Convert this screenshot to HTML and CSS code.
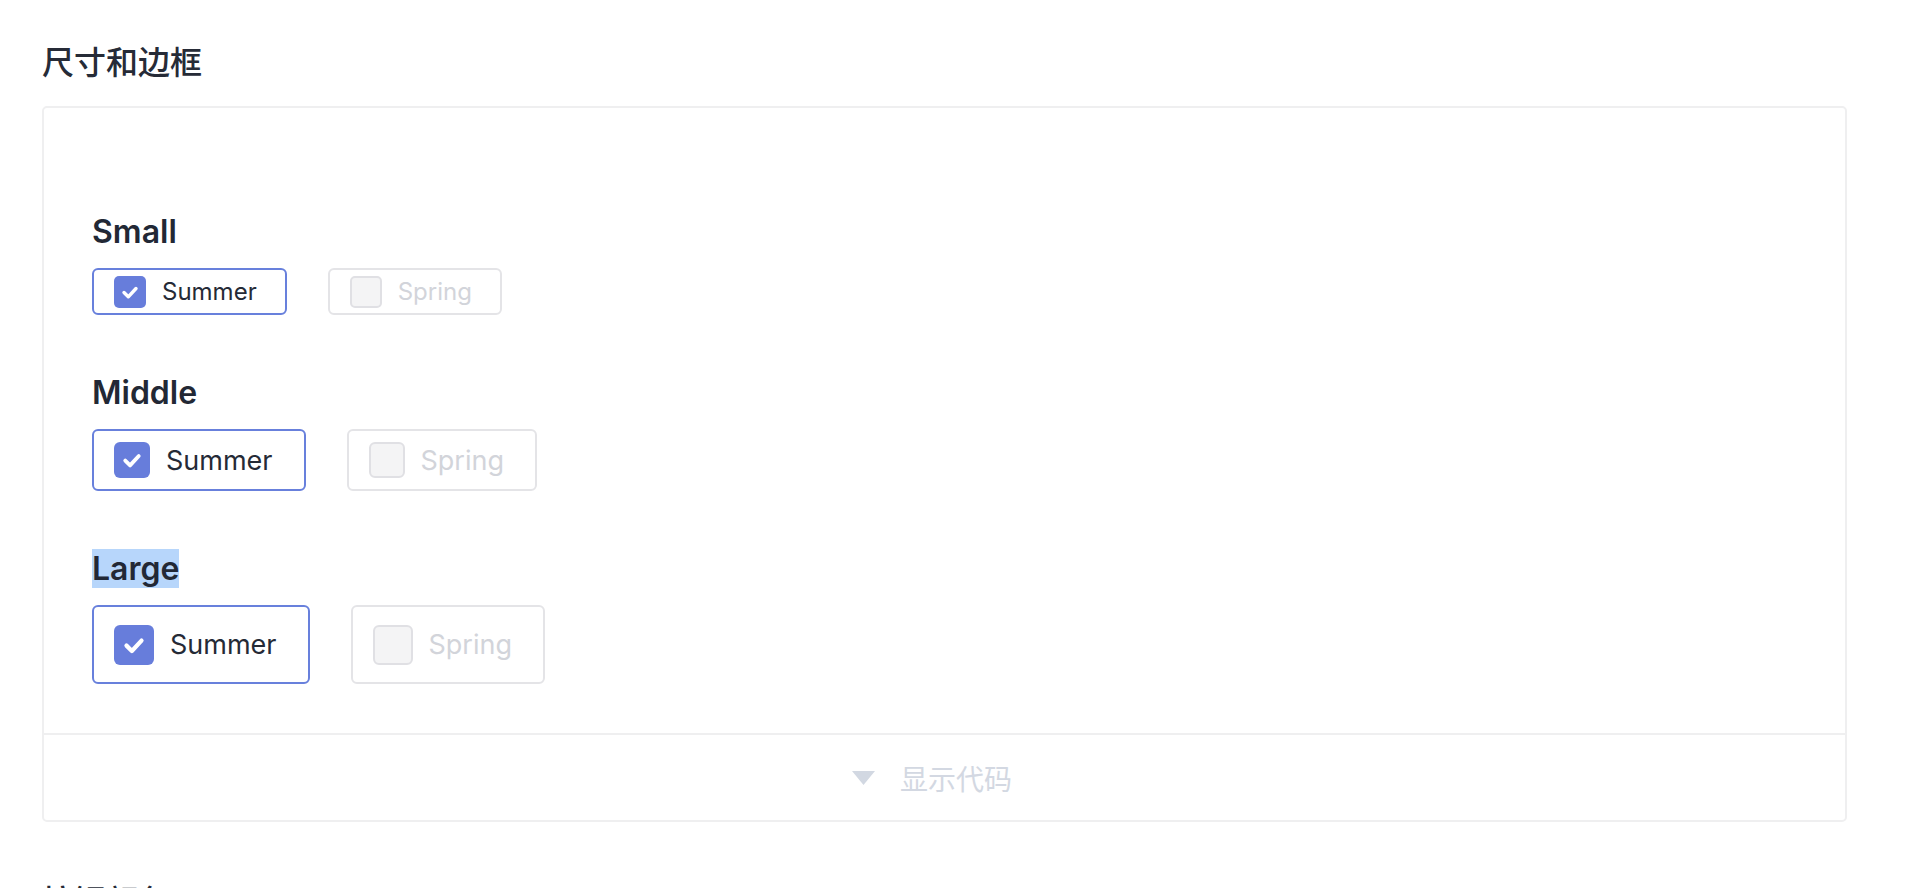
FILE: index.html
```html
<!DOCTYPE html>
<html lang="zh-CN">
<head>
    <meta charset="UTF-8">
    <meta name="viewport" content="width=device-width, initial-scale=1.0">
    <title>Checkbox 尺寸和边框</title>
    <link rel="stylesheet" href="styles.css">
</head>
<body>

<div class="page">
    <h2 class="section-title">尺寸和边框</h2>

    <div class="demo-block">
        <div class="demo-body">

            <div class="size-group">
                <h4 class="size-label">Small</h4>
                <div class="check-row">
                    <label class="check-item small checked">
                        <span class="check-box">
                            <svg viewBox="0 0 32 32"><polyline points="10,16.5 14.3,20.8 22,12.5"/></svg>
                        </span>
                        <span class="check-text">Summer</span>
                    </label>
                    <label class="check-item small disabled">
                        <span class="check-box"></span>
                        <span class="check-text">Spring</span>
                    </label>
                </div>
            </div>

            <div class="size-group">
                <h4 class="size-label">Middle</h4>
                <div class="check-row">
                    <label class="check-item middle checked">
                        <span class="check-box">
                            <svg viewBox="0 0 32 32"><polyline points="10,16.5 14.3,20.8 22,12.5"/></svg>
                        </span>
                        <span class="check-text">Summer</span>
                    </label>
                    <label class="check-item middle disabled">
                        <span class="check-box"></span>
                        <span class="check-text">Spring</span>
                    </label>
                </div>
            </div>

            <div class="size-group">
                <h4 class="size-label"><span class="selected">Large</span></h4>
                <div class="check-row">
                    <label class="check-item large checked">
                        <span class="check-box">
                            <svg viewBox="0 0 32 32"><polyline points="10,16.5 14.3,20.8 22,12.5"/></svg>
                        </span>
                        <span class="check-text">Summer</span>
                    </label>
                    <label class="check-item large disabled">
                        <span class="check-box"></span>
                        <span class="check-text">Spring</span>
                    </label>
                </div>
            </div>

        </div>

        <div class="demo-footer">
            <svg class="toggle-arrow" viewBox="0 0 23 14"><polygon points="0,0 23,0 11.5,14"/></svg>
            <span>显示代码</span>
        </div>
    </div>

    <h2 class="section-title next">按钮颜色</h2>
</div>

</body>
</html>
```

FILE: styles.css
```css
html, body {
    height: 888px;
    overflow: hidden;
}

body {
    margin: 0;
    background: #fff;
    color: #252a36;
    font-family: Inter, "Noto Sans CJK SC", sans-serif;
}

.page {
    padding: 41px 0 0 42px;
    width: 1805px;
}

.section-title {
    margin: 0 0 21px;
    font-size: 32px;
    line-height: 44px;
    font-weight: 500;
    color: #262b37;
}

.section-title.next {
    margin-top: 58px;
}

/* bloc demo */
.demo-block {
    border: 2px solid #efeff0;
    border-radius: 5px;
}

.demo-body {
    padding: 104px 0 49px 48px;
    border-bottom: 2px solid #efeff0;
}

.size-group + .size-group {
    margin-top: 58px;
}

.size-label {
    margin: 0 0 17px;
    font-size: 32px;
    line-height: 39px;
    font-weight: 600;
    color: #222835;
}

.size-label .selected {
    background: #b7d6fb;
}

.check-row {
    display: flex;
    gap: 41px;
}

.check-item {
    display: inline-flex;
    align-items: center;
    gap: 16px;
    box-sizing: border-box;
    padding: 0 31px 0 20px;
    border: 2px solid #6880dc;
    border-radius: 6px;
    background: #fff;
}

.check-box {
    box-sizing: border-box;
    display: flex;
    flex-shrink: 0;
    border-radius: 6px;
}

.check-box svg {
    width: 100%;
    height: 100%;
    fill: none;
    stroke: #fff;
    stroke-width: 3.4;
    stroke-linecap: round;
    stroke-linejoin: round;
}

.checked .check-box {
    background: #677ddb;
}

.disabled {
    border-color: #e4e4e7;
}

.disabled .check-box {
    background: #f4f4f5;
    border: 2px solid #e0e0e4;
}

.disabled .check-text {
    color: #d2d4da;
}

/* kich thuoc */
.small {
    height: 47px;
    padding-right: 28px;
    font-size: 24px;
}
.small .check-box {
    width: 32px;
    height: 32px;
    border-radius: 5px;
}

.middle {
    height: 62px;
    font-size: 27px;
}
.middle .check-box {
    width: 36px;
    height: 36px;
}

.large {
    height: 79px;
    font-size: 27px;
}
.large .check-box {
    width: 40px;
    height: 40px;
}

.demo-footer {
    height: 85px;
    display: flex;
    align-items: center;
    justify-content: center;
    gap: 25px;
    padding-right: 25px;
    color: #d3d8e2;
    font-size: 28px;
}

.toggle-arrow {
    width: 23px;
    height: 14px;
    fill: #d2d8e2;
}
```
